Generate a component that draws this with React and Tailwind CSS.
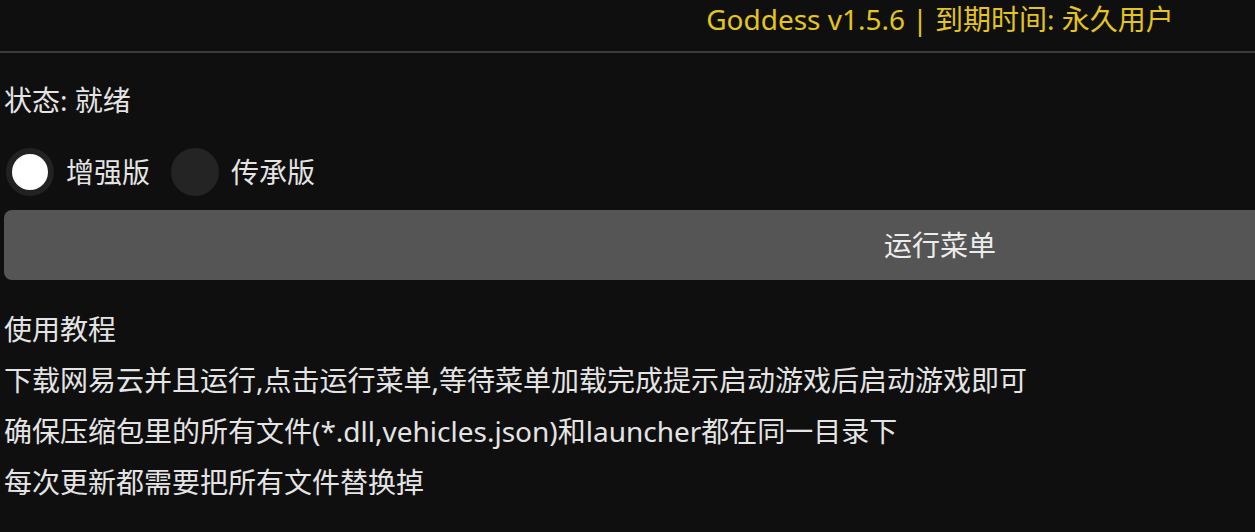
import React from "react";

const font = { fontFamily: '"Noto Sans", "Noto Sans CJK SC", sans-serif' };

function Radio({ checked, label }) {
  return (
    <div className="flex items-center">
      {checked ? (
        <div className="w-[48px] h-[48px] rounded-full bg-[#222222] flex items-center justify-center">
          <div className="w-[36px] h-[36px] rounded-full bg-white" />
        </div>
      ) : (
        <div className="w-[48px] h-[48px] rounded-full bg-[#242424]" />
      )}
      <span className="ml-[12px] text-[28px] leading-[48px] text-[#e4e4e4]">{label}</span>
    </div>
  );
}

export default function App() {
  return (
    <div className="w-full h-[532px] overflow-hidden bg-[#0f0f0f]" style={font}>
      <div className="w-[1880px] h-[532px] bg-[#0f0f0f]">
        <div className="h-[53px] border-b-2 border-[#3a3a3a] flex justify-center">
          <div className="text-[28px] leading-[38px] text-[#e3c51d]">
            Goddess v1.5.6 | 到期时间: 永久用户
          </div>
        </div>
        <div className="px-[4px]">
          <div className="mt-[27px] text-[28px] leading-[40px] text-[#e4e4e4]">状态: 就绪</div>
          <div className="mt-[28px] flex items-center gap-[21px] pl-[2px]">
            <Radio checked label="增强版" />
            <Radio label="传承版" />
          </div>
          <div className="mt-[14px] h-[70px] w-[1872px] rounded-[8px] bg-[#555555] flex items-center justify-center text-[28px] text-[#ececec]">
            运行菜单
          </div>
          <div className="mt-[24px] text-[28px] leading-[51px] text-[#e4e4e4]">
            <div>使用教程</div>
            <div>下载网易云并且运行,点击运行菜单,等待菜单加载完成提示启动游戏后启动游戏即可</div>
            <div>确保压缩包里的所有文件(*.dll,vehicles.json)和launcher都在同一目录下</div>
            <div>每次更新都需要把所有文件替换掉</div>
          </div>
        </div>
      </div>
    </div>
  );
}
